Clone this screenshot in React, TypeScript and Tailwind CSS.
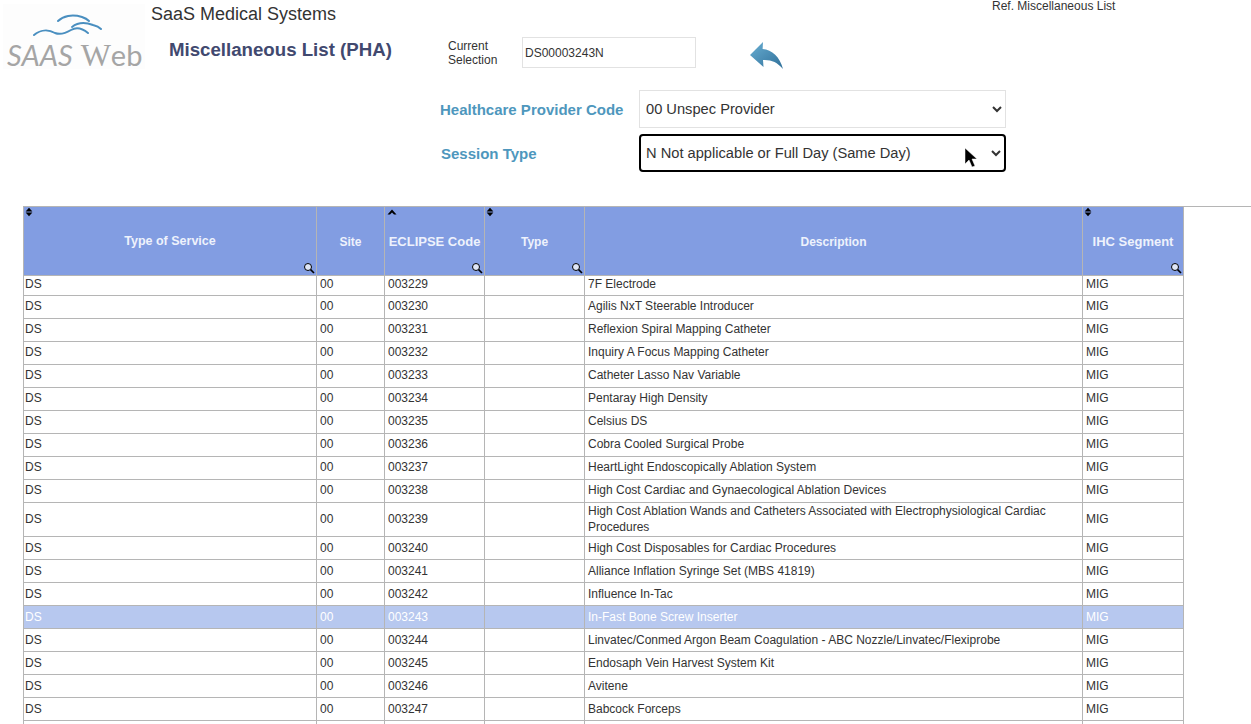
const rows: [string, string][] = [
  ['003229', '7F Electrode'],
  ['003230', 'Agilis NxT Steerable Introducer'],
  ['003231', 'Reflexion Spiral Mapping Catheter'],
  ['003232', 'Inquiry A Focus Mapping Catheter'],
  ['003233', 'Catheter Lasso Nav Variable'],
  ['003234', 'Pentaray High Density'],
  ['003235', 'Celsius DS'],
  ['003236', 'Cobra Cooled Surgical Probe'],
  ['003237', 'HeartLight Endoscopically Ablation System'],
  ['003238', 'High Cost Cardiac and Gynaecological Ablation Devices'],
  ['003239', 'High Cost Ablation Wands and Catheters Associated with Electrophysiological Cardiac Procedures'],
  ['003240', 'High Cost Disposables for Cardiac Procedures'],
  ['003241', 'Alliance Inflation Syringe Set (MBS 41819)'],
  ['003242', 'Influence In-Tac'],
  ['003243', 'In-Fast Bone Screw Inserter'],
  ['003244', 'Linvatec/Conmed Argon Beam Coagulation - ABC Nozzle/Linvatec/Flexiprobe'],
  ['003245', 'Endosaph Vein Harvest System Kit'],
  ['003246', 'Avitene'],
  ['003247', 'Babcock Forceps'],
];

function SortIcon({ up }: { up?: boolean }) {
  if (up) {
    return (
      <svg viewBox="0 0 10 6" className="absolute left-[2px] top-[2px] h-[6px] w-[10px]" fill="#000">
        <path d="M5 0.5 9.5 5.5H7L5 3.6 3 5.5H0.5Z" />
      </svg>
    );
  }
  return (
    <svg viewBox="0 0 10 10" className="absolute left-[0px] top-[0px] h-[10px] w-[10px]" fill="#000">
      <path d="M5 0.8 8.4 4.4H1.6Z" />
      <path d="M5 9.2 8.4 5.6H1.6Z" />
    </svg>
  );
}

function SearchIcon() {
  return (
    <svg viewBox="0 0 12 12" className="absolute bottom-[1px] right-[1px] h-[12px] w-[12px]" fill="none" stroke="#000">
      <circle cx="5" cy="5" r="3.5" fill="#dfe6f7" strokeWidth="1" />
      <path d="M7.6 7.6 11 11" strokeWidth="1.6" />
    </svg>
  );
}

function Head({ label, sort = true, up, search = true, className }: { label: string; sort?: boolean; up?: boolean; search?: boolean; className: string }) {
  return (
    <th className={`relative border border-t-0 border-[#b5b5b5] p-0 pt-[2px] text-center font-bold text-[#eef2fc] ${className}`}>
      {sort && <SortIcon up={up} />}
      {label}
      {search && <SearchIcon />}
    </th>
  );
}

function Logo() {
  return (
    <div className="flex h-[65px] w-[142px] flex-col bg-[#fdfdfd]">
      <svg viewBox="0 0 142 36" className="h-[36px] w-[142px] shrink-0" fill="none" stroke="#4a8fc0" strokeWidth="2" strokeLinecap="round">
        <path d="M55 17C60 12 69 10 79 13 82 14 84 15 86 17" />
        <path d="M69 23C74 19 82 18 90 21 94 22 96 23 98 25" />
        <path d="M31 31C37 26 45 25 52 29 57 31 63 29 68 26 73 23 79 24 85 29" />
      </svg>
      <div className="mt-[2px] flex items-baseline whitespace-nowrap pl-[4px] font-['Lato',sans-serif] text-[29px] leading-[26px] text-[#a5a5a5]">
        <span className="italic">SAAS</span>
        <span className="ml-[8px] font-['Liberation_Serif',serif] text-[32px]">W</span>
        <span>eb</span>
      </div>
    </div>
  );
}

function BackArrow() {
  return (
    <svg viewBox="0 0 34 28" className="h-[28px] w-[34px]">
      <defs>
        <linearGradient id="arrowFill" x1="0" y1="0" x2="1" y2="1">
          <stop offset="0" stopColor="#69aed2" />
          <stop offset="1" stopColor="#2f6f99" />
        </linearGradient>
      </defs>
      <path d="M0 13 13 0 12.6 7C22 7.5 30 15 33 27 27 20 21 17.5 13 18L13.5 25Z" fill="url(#arrowFill)" />
    </svg>
  );
}

const cell = 'border border-[#b5b5b5] px-[3px] py-0 leading-[16px]';

export default function App() {
  return (
    <div className="h-[724px] w-[1251px] overflow-hidden bg-white font-['Liberation_Sans',Arial,sans-serif] text-[12px] text-[#333]">
      {/* Top block */}
      <div className="flex h-[206px]">
        <div className="w-[151px] shrink-0 pl-[3px] pt-[4px]">
          <Logo />
        </div>
        <div className="w-[289px] shrink-0">
          <div className="pt-[4px] text-[18px] leading-[20px] text-[#333]">SaaS Medical Systems</div>
          <h1 className="ml-[18px] mt-[6px] text-[18.67px] font-bold leading-[40px] text-[#41496f]">Miscellaneous List (PHA)</h1>
        </div>
        <div className="flex-1">
          <div className="flex h-[90px] items-start">
            <div className="ml-[8px] mt-[39px] w-[74px] leading-[14px]">Current<br />Selection</div>
            <input
              readOnly
              value="DS00003243N"
              className="mt-[37px] h-[31px] w-[174px] border border-[#e2e2e2] px-[2px] text-[12px] text-[#333]"
            />
            <div className="ml-[54px] mt-[42px]"><BackArrow /></div>
            <div className="ml-[208px] mt-[-1px] text-right leading-[14px]">Ref. Miscellaneous List</div>
          </div>
          <div className="flex items-center">
            <label className="w-[199px] pt-[2px] text-[15px] font-bold text-[#4e97bd]">Healthcare Provider Code</label>
            <select className="h-[38px] w-[367px] border border-[#e2e2e2] bg-white pl-[2px] text-[14.67px] text-[#333]" defaultValue="00">
              <option value="00">00 Unspec Provider</option>
            </select>
          </div>
          <div className="relative mt-[6px] flex items-center">
            <label className="w-[199px] pl-[1px] pt-[2px] text-[15px] font-bold text-[#4e97bd]">Session Type</label>
            <select className="h-[38px] w-[367px] rounded-[4px] border-2 border-black bg-white pl-[1px] text-[14.67px] text-[#333]" defaultValue="N">
              <option value="N">N Not applicable or Full Day (Same Day)</option>
            </select>
            <svg viewBox="0 0 14 20" className="absolute left-[524px] top-[14px] h-[20px] w-[14px]">
              <path d="M1 0v16l4-4 3 7 3-1-3-7h5Z" fill="#000" stroke="#fff" strokeWidth="0.5" />
            </svg>
          </div>
        </div>
      </div>

      {/* Table */}
      <div className="ml-[23px] border-t border-[#b5b5b5]">
        <table className="w-[1161px] table-fixed border-collapse bg-white">
          <thead>
            <tr className="h-[68px] bg-[#829de2]">
              <Head label="Type of Service" className="w-[293px] text-[12.5px]" />
              <Head label="Site" sort={false} search={false} className="w-[68px] text-[12px]" />
              <Head label="ECLIPSE Code" up className="w-[100px] text-[13px]" />
              <Head label="Type" className="w-[100px] text-[12px]" />
              <Head label="Description" sort={false} search={false} className="w-[498px] text-[12px]" />
              <Head label="IHC Segment" className="w-[101px] text-[13px]" />
            </tr>
          </thead>
          <tbody>
            {rows.map(([code, desc], i) => {
              const selected = code === '003243';
              const tall = code === '003239';
              // first row sits tight to the header, rows above the two-line one run a pixel high
              const pad = i === 0 ? 'align-top leading-[14px]' : i < 10 ? 'pb-[1px]' : '';
              return (
                <tr
                  key={code}
                  className={`${i === 0 ? 'h-[20px]' : tall ? 'h-[34px]' : 'h-[23px]'} ${selected ? 'bg-[#b7c8ef] text-white' : ''}`}
                >
                  <td className={`${cell} pl-[1px] ${pad}`}>DS</td>
                  <td className={`${cell} ${pad}`}>00</td>
                  <td className={`${cell} ${pad}`}>{code}</td>
                  <td className={`${cell} ${pad}`} />
                  <td className={`${cell} ${pad}`}>{desc}</td>
                  <td className={`${cell} ${pad}`}>MIG</td>
                </tr>
              );
            })}
            <tr className="h-[23px]">
              <td className={cell} />
              <td className={cell} />
              <td className={cell} />
              <td className={cell} />
              <td className={cell} />
              <td className={cell} />
            </tr>
          </tbody>
        </table>
      </div>
    </div>
  );
}
